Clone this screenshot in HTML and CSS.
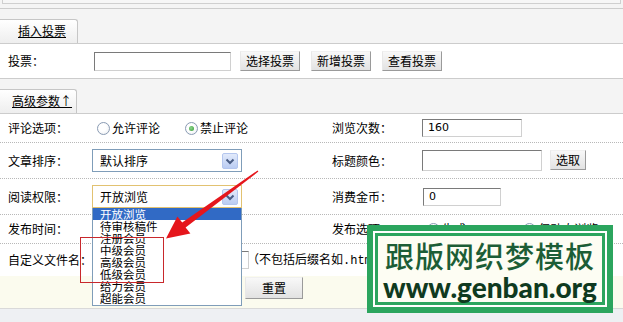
FILE: index.html
```html
<!DOCTYPE html>
<html>
<head>
<meta charset="utf-8">
<link rel="stylesheet" href="styles.css">
</head>
<body>
<div class="page">
  <div class="topbox"></div>
  <div class="tabbar first"><div class="tab"><a class="tablink">插入投票</a></div></div>
  <div class="vote-row">
    <span class="vlbl">投票：</span>
    <span class="input vote-input"></span>
    <span class="btn">选择投票</span>
    <span class="btn">新增投票</span>
    <span class="btn">查看投票</span>
  </div>
  <div class="tabbar"><div class="tab tab2"><a class="tablink">高级参数↑</a></div></div>
  <div class="rows">
    <div class="row r1">
      <span class="lbl">评论选项：</span>
      <span class="field radios">
        <span class="radio"></span><span class="rtext">允许评论</span>
        <span class="radio checked"></span><span class="rtext">禁止评论</span>
      </span>
      <span class="lbl">浏览次数：</span>
      <span class="field"><span class="input num w100">160</span></span>
    </div>
    <div class="row r2">
      <span class="lbl">文章排序：</span>
      <span class="field">
        <span class="select"><span class="seltext">默认排序</span>
          <svg class="selbtn" width="16" height="16" viewBox="0 0 16 16"><defs><linearGradient id="g1" x1="0" y1="0" x2="0" y2="1"><stop offset="0" stop-color="#e3ebfb"/><stop offset="1" stop-color="#b9cbf2"/></linearGradient></defs><rect x="0.5" y="0.5" width="15" height="15" rx="1.5" fill="url(#g1)" stroke="#b4c6ee"/><path d="M4.5 6.5 L8 10 L11.5 6.5" fill="none" stroke="#4a5d85" stroke-width="2"/></svg>
        </span>
      </span>
      <span class="lbl">标题颜色：</span>
      <span class="field"><span class="input w120"></span><span class="btn pick">选取</span></span>
    </div>
    <div class="row r3">
      <span class="lbl">阅读权限：</span>
      <span class="field">
        <span class="select hot"><span class="seltext">开放浏览</span>
          <svg class="selbtn" width="16" height="16" viewBox="0 0 16 16"><defs><linearGradient id="g2" x1="0" y1="0" x2="0" y2="1"><stop offset="0" stop-color="#e3ebfb"/><stop offset="1" stop-color="#b9cbf2"/></linearGradient></defs><rect x="0.5" y="0.5" width="15" height="15" rx="1.5" fill="url(#g2)" stroke="#b4c6ee"/><path d="M4.5 6.5 L8 10 L11.5 6.5" fill="none" stroke="#4a5d85" stroke-width="2"/></svg>
          <span class="droplist">
            <span class="opt sel">开放浏览</span>
            <span class="opt">待审核稿件</span>
            <span class="opt">注册会员</span>
            <span class="opt">中级会员</span>
            <span class="opt">高级会员</span>
            <span class="opt">低级会员</span>
            <span class="opt">给力会员</span>
            <span class="opt">超能会员</span>
          </span>
        </span>
      </span>
      <span class="lbl">消费金币：</span>
      <span class="field"><span class="input num w78">0</span></span>
    </div>
    <div class="row r4">
      <span class="lbl">发布时间：</span>
      <span class="field"></span>
      <span class="lbl">发布选项：</span>
      <span class="field radios">
        <span class="radio"></span><span class="rtext">生成HTML</span>
        <span class="radio"></span><span class="rtext">仅动态浏览</span>
      </span>
    </div>
    <div class="row r5">
      <span class="lbl">自定义文件名：</span>
      <span class="field wide"><span class="input fname"></span><span class="note">（不包括后缀名如<span class="mono">.html</span>）</span></span>
    </div>
  </div>
  <div class="footer"><span class="btn reset">重置</span></div>
  <div class="bottom"></div>

  <div class="redbox"></div>
  <svg class="arrow" width="623" height="322" viewBox="0 0 623 322">
    <polygon points="257.6,170.4 182.2,222.6 177.4,216.4 166,238.5 190.4,233.4 185.6,227.6 258.4,171.6" fill="#e5161c"/>
  </svg>
  <div class="wm">
    <div class="wm-in">
      <div class="wm-cn">跟版网织梦模板</div>
      <div class="wm-en">www.genban.org</div>
    </div>
  </div>
</div>
</body>
</html>
```
FILE: styles.css
```css
* { box-sizing: border-box; }
body {
  margin: 0;
  background: #f4f4f4;
  font-family: "Noto Sans CJK SC", "Liberation Sans", sans-serif;
  font-size: 12px;
  line-height: 14px;
  color: #000;
}
.page {
  position: relative;
  width: 623px;
  height: 322px;
  overflow: hidden;
  background: #f4f4f4;
}
.topbox {
  height: 4px;
  margin: 0 2px 4px 2px;
  border: 1px solid #cfcfcf;
  border-top: none;
  background: #f6f6f6;
}
.tabbar {
  height: 35px;
  padding-top: 10px;
  border-bottom: 1px solid #cccccc;
  background: #f4f4f4;
}
.tabbar.first {
  height: 36px;
  border-top: 1px solid #cccccc;
}
.tab {
  width: 78px;
  height: 24px;
  border: 1px solid #c6c6c6;
  border-left: none;
  border-bottom: none;
  border-radius: 0 3px 0 0;
  background: linear-gradient(#ffffff, #eeeeee);
  padding: 4px 0 0 18px;
}
.tab2 { width: 77px; padding-left: 12px; }
.tablink {
  text-decoration: underline;
  color: #000;
  line-height: 14px;
}
.vote-row {
  height: 35px;
  display: flex;
  align-items: center;
  padding-left: 8px;
  background: #fff;
  border-bottom: 1px solid #cccccc;
}
.vlbl { width: 86px; }
.input {
  display: inline-block;
  height: 18px;
  background: #fff;
  border: 1px solid;
  border-color: #7a7a7a #d0d0d0 #d0d0d0 #7a7a7a;
  vertical-align: middle;
}
.vote-input { width: 137px; height: 19px; margin-right: 9px; }
.btn {
  display: inline-block;
  height: 20px;
  padding: 0 5px;
  line-height: 18px;
  background: linear-gradient(#f8f8f8, #e2e2e2);
  border: 1px solid;
  border-color: #f0f0f0 #9a9a9a #9a9a9a #e8e8e8;
  margin-right: 11px;
  white-space: nowrap;
}
.rows { background: #fff; }
.row {
  display: grid;
  grid-template-columns: 84px 240px 90px 1fr;
  align-items: center;
  padding-left: 8px;
  border-bottom: 1px dotted #b8b8b8;
}
.r1 { height: 29px; }
.r2 { height: 36px; }
.r3 { height: 36px; }
.r4 { height: 29px; }
.r5 { height: 32px; border-bottom: none; }
.lbl { white-space: nowrap; }
.field { display: flex; align-items: center; white-space: nowrap; }
.wide { grid-column: 2 / 5; }
.radios { padding-left: 5px; }
.radio {
  display: inline-block;
  width: 13px;
  height: 13px;
  border-radius: 50%;
  border: 1px solid #8a9bb3;
  background: radial-gradient(circle at 40% 40%, #ffffff 40%, #e6e9ee 100%);
  margin-right: 2px;
  position: relative;
}
.radio.checked::after {
  content: "";
  position: absolute;
  left: 3px;
  top: 3px;
  width: 5px;
  height: 5px;
  border-radius: 50%;
  background: radial-gradient(circle at 40% 40%, #8fd68f, #2f9a30);
}
.rtext { margin-right: 25px; }
.num {
  font-family: "DejaVu Sans", "Liberation Sans", sans-serif;
  font-size: 11px;
  line-height: 16px;
  padding-left: 5px;
}
.w100 { width: 100px; }
.w120 { width: 120px; height: 21px; margin-right: 8px; }
.w78 { width: 78px; margin-left: 1px; }
.pick { height: 20px; margin-top: -1px; }
.select {
  position: relative;
  display: inline-block;
  width: 150px;
  height: 23px;
  border: 1px solid #7f9db9;
  background: #fff;
  padding: 4px 0 0 7px;
}
.select.hot { border-color: #e2c271; }
.selbtn { position: absolute; right: 3px; top: 3px; }
.droplist {
  position: absolute;
  left: -1px;
  top: 22px;
  width: 150px;
  display: flex;
  flex-direction: column;
  background: #fff;
  border: 1px solid #7f9db9;
  border-top: none;
  padding-bottom: 1px;
  z-index: 5;
}
.opt {
  display: block;
  height: 12px;
  font-size: 11.5px;
  line-height: 12px;
  padding-left: 7px;
}
.opt.sel { background: #316ac5; color: #fff; }
.fname { width: 155px; height: 18px; margin-left: 2px; margin-right: 0; }
.note { margin-left: -2px; }
.mono { font-family: "Liberation Mono", monospace; }
.footer {
  height: 32px;
  background: #fbfbee;
  padding: 1px 0 0 245px;
}
.reset { width: 58px; height: 22px; text-align: center; line-height: 20px; }
.bottom {
  height: 20px;
  border-top: 1px solid #d9d9d9;
  background: #eef0f3;
}
.redbox {
  position: absolute;
  left: 80px;
  top: 237px;
  width: 84px;
  height: 46px;
  border: 1px solid #c8282c;
  z-index: 6;
}
.arrow {
  position: absolute;
  left: 0;
  top: 0;
  z-index: 7;
  pointer-events: none;
}
.wm {
  position: absolute;
  left: 367px;
  top: 225px;
  width: 246px;
  height: 88px;
  border: 6px solid #2ba55e;
  background: #ffffff;
  padding: 2px;
  z-index: 8;
}
.wm-in {
  height: 100%;
  border: 3px solid #2ba55e;
  background: #fdfdf3;
  display: flex;
  flex-direction: column;
  align-items: center;
  padding-top: 3px;
}
.wm-cn {
  font-family: "Noto Sans CJK SC", sans-serif;
  font-size: 29px;
  line-height: 33px;
  letter-spacing: 1px;
  font-weight: 500;
  color: #1c5d36;
}
.wm-en {
  font-family: "Lato", "Liberation Sans", sans-serif;
  font-size: 28px;
  line-height: 30px;
  font-weight: 900;
  color: #0f3a20;
}
```
